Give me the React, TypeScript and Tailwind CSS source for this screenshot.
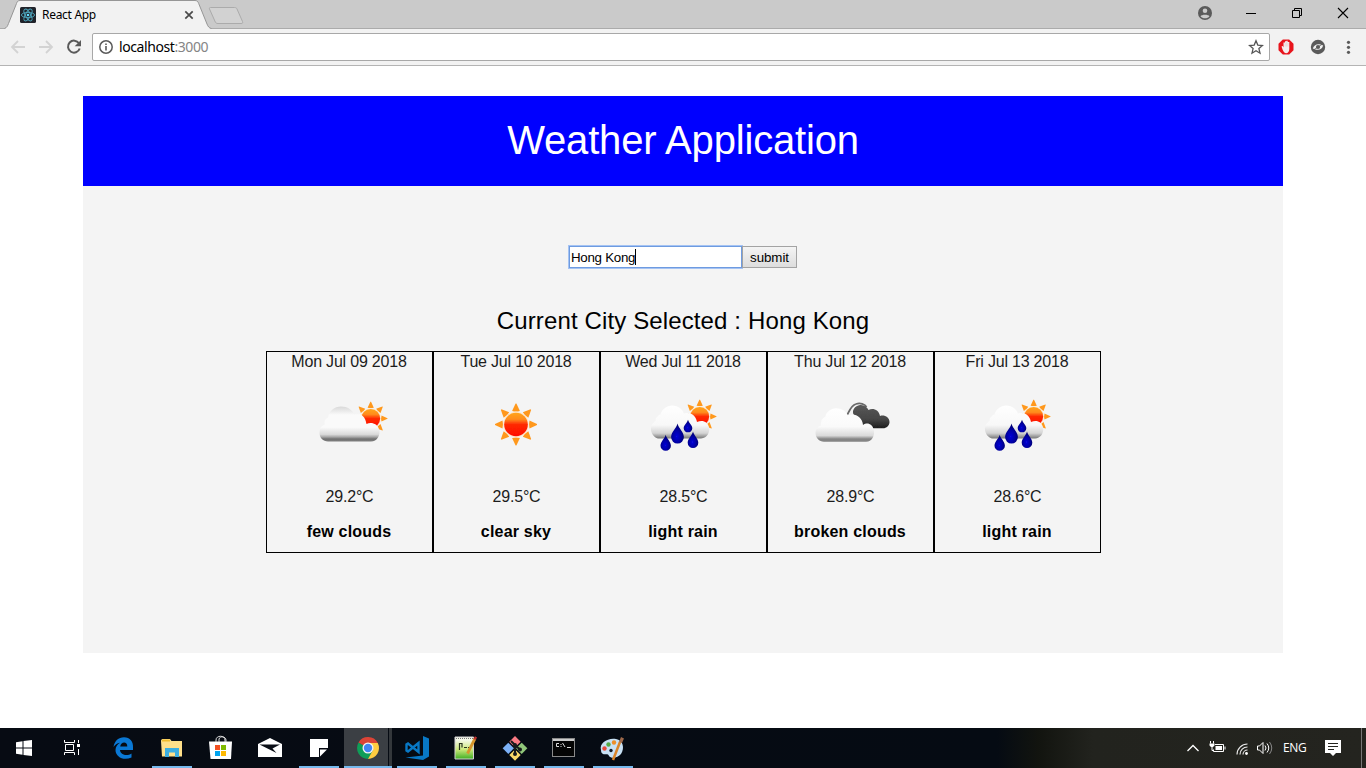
import React from "react";

function TabStrip() {
  return (
    <div className="flex h-[29px] w-full bg-[#cacaca]">
      <div className="relative h-[29px] w-[1184px]">
        <svg className="block h-[29px] w-[1184px]" viewBox="0 0 1184 29" fill="none">
          <path d="M0 28.5H1184" stroke="#ababab" />
          <path d="M4.500 29C7 27.500 7.500 26 8.500 23.500L16.500 3.500C17.200 1.500 18 .5 20 .5H195C197 .5 198 1.500 198.700 3.500L207 24C208 26.500 209 28 211.500 29Z" fill="#f2f2f2" />
          <path d="M4.500 28.500C7 27.500 7.500 26 8.500 23.500L16.500 3.500C17.200 1.500 18 .5 20 .5H195C197 .5 198 1.500 198.700 3.500L207 24C208 26.500 209 28 211.500 28.500" stroke="#969696" />
          <path d="M210.500 7.500H234.500C236 7.500 236.600 8 237 9L242.500 21.500C243 23 242.500 23.500 241 23.500H218C216.500 23.500 215.800 23 215.300 22L209.500 9C209.200 8 209.500 7.500 210.500 7.500Z" fill="#d2d2d2" stroke="#ababab" />
          <rect x="20" y="7" width="16" height="16" rx="1.500" fill="#20232a" />
          <g stroke="#4fa9c0" strokeWidth=".9">
            <ellipse cx="28" cy="15" rx="6.600" ry="2.600" />
            <ellipse cx="28" cy="15" rx="6.600" ry="2.600" transform="rotate(60 28 15)" />
            <ellipse cx="28" cy="15" rx="6.600" ry="2.600" transform="rotate(120 28 15)" />
          </g>
          <circle cx="28" cy="15" r="1.300" fill="#61dafb" />
          <path d="M185.300 11.300L192.700 18.700M192.700 11.300L185.300 18.700" stroke="#4a4a4a" strokeWidth="1.700" />
        </svg>
        <span className="absolute left-[42px] top-[7px] text-[12px] leading-[16px] tracking-[-0.3px] text-black">React App</span>
      </div>
      <svg className="block h-[29px] w-[182px]" viewBox="1184 0 182 29" fill="none">
        <path d="M1184 28.500H1366" stroke="#ababab" />
        <circle cx="1205" cy="13" r="7" fill="#5a5a5a" />
        <circle cx="1205" cy="10.700" r="2.300" fill="#cacaca" />
        <path d="M1200.500 16.300C1201.500 14.300 1208.500 14.300 1209.500 16.300C1207.500 19 1202.500 19 1200.500 16.300Z" fill="#cacaca" />
        <path d="M1246 13.500H1256M1292.500 10.500H1299.500V17.500H1292.500ZM1294.500 10V8.500H1301.500V15.500H1300" stroke="#000" />
        <path d="M1338 8L1348 18M1348 8L1338 18" stroke="#000" strokeWidth="1.100" />
      </svg>
    </div>
  );
}

function Toolbar() {
  return (
    <div className="flex h-[37px] w-full items-start border-b border-[#b4b4b4] bg-[#f2f2f2]">
      <svg className="block h-9 w-[92px]" viewBox="0 29 92 36" fill="none">
        <path d="M25 47H12.500M18 41L12 47L18 53M39 47H51.500M46 41L52 47L46 53" stroke="#d3d3d3" strokeWidth="1.800" />
        <path d="M79 43.300A6 6 0 1 0 79.700 48.500" stroke="#5a5a5a" strokeWidth="2" />
        <path d="M81 40V46.300H74.700Z" fill="#5a5a5a" />
      </svg>
      <div className="mt-1 flex h-7 w-[1178px] items-center justify-between rounded-[2px] border border-[#a8a8a8] bg-white">
        <div className="flex items-center">
          <svg className="ml-[5px] h-4 w-4" viewBox="0 0 16 16" fill="none">
            <circle cx="8" cy="8" r="6.200" stroke="#5a5a5a" strokeWidth="1.500" />
            <path d="M8 7V11.500M8 4.400V6" stroke="#5a5a5a" strokeWidth="1.600" />
          </svg>
          <span className="ml-[5px] text-[14px] leading-[18px] tracking-[-0.42px] text-black">localhost<span className="text-[#858585]">:3000</span></span>
        </div>
        <svg className="mr-[5px] h-4 w-4" viewBox="0 0 16 16" fill="none">
          <path d="M8 1.800L9.800 6.100L14.500 6.500L10.900 9.600L12 14.200L8 11.700L4 14.200L5.100 9.600L1.500 6.500L6.200 6.100Z" stroke="#555" strokeWidth="1.300" />
        </svg>
      </div>
      <svg className="block h-9 w-24" viewBox="1270 29 96 36" fill="none">
        <path d="M1282.800 39.500H1289.200L1293.500 43.700V50.300L1289.200 54.500H1282.800L1278.500 50.300V43.700Z" fill="#e8141c" />
        <path d="M1281.500 46.500L1282.800 46L1283.500 47.500V42.500H1285V41.300H1286.400V40.800H1287.700V42H1289.300V49C1289.300 51.500 1288 53.300 1286 53.300C1284 53.300 1283 51 1281.500 46.500Z" fill="#f4eeee" />
        <path d="M1285.200 43V46.500M1286.700 42V46.500M1288 43V46.500" stroke="#e3b9b9" strokeWidth=".4" />
        <circle cx="1318" cy="47" r="7.200" fill="#5a5a5a" />
        <path d="M1312.800 48.500C1314 44.500 1318 42.800 1323.200 45.500C1322 49.500 1318 51.200 1312.800 48.500Z" fill="#f2f2f2" />
        <circle cx="1318" cy="47" r="2.100" fill="#5a5a5a" />
        <path d="M1313.500 50L1322.500 44" stroke="#5a5a5a" strokeWidth=".8" />
        <g fill="#5a5a5a"><circle cx="1348.500" cy="42.300" r="1.600" /><circle cx="1348.500" cy="47.300" r="1.600" /><circle cx="1348.500" cy="52.300" r="1.600" /></g>
      </svg>
    </div>
  );
}

function WeatherDefs() {
  return (
    <defs>
      <linearGradient id="sunDisc" x1="0" y1="0" x2="0" y2="1">
        <stop offset="0" stopColor="#ffa51c" />
        <stop offset=".28" stopColor="#ff8c1e" />
        <stop offset=".5" stopColor="#ff2a04" />
        <stop offset="1" stopColor="#ff0a00" />
      </linearGradient>
      <linearGradient id="cloudFill" gradientUnits="userSpaceOnUse" x1="0" y1="35" x2="0" y2="70.500">
        <stop offset="0" stopColor="#d6d6d6" />
        <stop offset=".25" stopColor="#fafafa" />
        <stop offset=".6" stopColor="#fafafa" />
        <stop offset=".8" stopColor="#dadada" />
        <stop offset=".87" stopColor="#a9a9a9" />
        <stop offset=".93" stopColor="#707070" />
        <stop offset="1" stopColor="#808080" />
      </linearGradient>
      <linearGradient id="whiteCloud" gradientUnits="userSpaceOnUse" x1="0" y1="37" x2="0" y2="70.700">
        <stop offset="0" stopColor="#fff" />
        <stop offset=".55" stopColor="#fafafa" />
        <stop offset=".82" stopColor="#dadada" />
        <stop offset=".92" stopColor="#858585" />
        <stop offset="1" stopColor="#858585" />
      </linearGradient>
      <linearGradient id="rainCloud" gradientUnits="userSpaceOnUse" x1="0" y1="34" x2="0" y2="67.500">
        <stop offset="0" stopColor="#fff" />
        <stop offset=".6" stopColor="#f8f8f8" />
        <stop offset=".84" stopColor="#d4d4d4" />
        <stop offset="1" stopColor="#777" />
      </linearGradient>
      <linearGradient id="darkCloud" x1="0" y1="0" x2="0" y2="1">
        <stop offset="0" stopColor="#595959" />
        <stop offset=".6" stopColor="#464646" />
        <stop offset="1" stopColor="#1c1c1c" />
      </linearGradient>
      <radialGradient id="drop" cx=".45" cy=".65" r=".6">
        <stop offset="0" stopColor="#0808d8" />
        <stop offset=".5" stopColor="#0000a8" />
        <stop offset="1" stopColor="#00006c" />
      </radialGradient>
      <filter id="soft" x="-10%" y="-10%" width="120%" height="120%"><feGaussianBlur stdDeviation=".6" /></filter>
    </defs>
  );
}

const RAYS = [0, 45, 90, 135, 180, 225, 270, 315];

function Sun({ x, y, scale = 1 }: { x: number; y: number; scale?: number }) {
  return (
    <g transform={`translate(${x} ${y}) scale(${scale})`}>
      {RAYS.map((a) => (
        <path key={a} d="M-3.900 -13.500L-.4 -21H.4L3.900 -13.500Q0 -12.500 -3.900 -13.500Z" fill="#ff981c" transform={`rotate(${a})`} />
      ))}
      <circle r="12.800" fill="#ffe6c8" />
      <circle r="11.800" fill="url(#sunDisc)" />
    </g>
  );
}

const LOW_CLOUD = "M61 70.500C56 70.500 52.500 66.500 52.500 62C52.500 58 54 55 57.500 53.500C57 50 58.500 47.500 61 46.500C62 40 67.500 35.500 74 35.500C80.500 35.500 85.500 39 87 43.500C92 41.500 98 44 99.500 53C104 50.500 110.500 52.500 112 58C114 64 110 70.500 104 70.500Z";
const RAIN_CLOUD = "M57 67.500C53 66.500 49.500 62 50 57C50.500 53.500 52.500 51 54.500 50C54.500 46.500 57.500 44 59.500 43.500C61 38 66 34.500 71 34.500C77.500 34.500 81.500 38.500 83 42.500C89.500 41 94.500 44 96 51C101.500 48.500 106.500 50.500 108 56C109 61 106.500 67 100 67.500Z";
const WHITE_CLOUD = "M56 70.700C51 70.700 47.500 66.500 47.500 62C47.500 58 50 55.500 53 54.500C52.500 50.500 54 47 57.500 45.500C58 41 63 37.300 68 37.300C73.500 37.300 78.500 40.500 80 44.500C87 41.500 94.500 46.500 95 54C99.500 50.500 104.500 53.500 105.500 58C107.500 64.500 104 70.700 98 70.700Z";

function Drop({ x, y, w, h }: { x: number; y: number; w: number; h: number }) {
  return (
    <path
      transform={`translate(${x} ${y}) scale(${w / 10} ${h / 15})`}
      d="M0 0C.8 3.500 5 6.500 5 10.200A5 4.800 0 0 1 -5 10.200C-5 6.500 -.8 3.500 0 0Z"
      fill="url(#drop)"
    />
  );
}

type Sky = "few" | "clear" | "rain" | "broken";

function WeatherIcon({ sky }: { sky: Sky }) {
  return (
    <svg className="block h-[100px] w-[165px]" viewBox="0 0 165 100">
      <WeatherDefs />
      <g filter="url(#soft)">
        {sky === "clear" && <Sun x={82} y={53.5} />}
        {sky === "few" && (
          <>
            <Sun x={103.700} y={47.500} scale={0.8} />
            <path d={LOW_CLOUD} fill="url(#cloudFill)" />
          </>
        )}
        {sky === "rain" && (
          <>
            <Sun x={98.700} y={45.500} scale={0.8} />
            <path d={RAIN_CLOUD} fill="url(#rainCloud)" />
            <Drop x={64.700} y={63.800} w={10.400} h={16} />
            <Drop x={76.500} y={52.500} w={12.800} h={20} />
            <Drop x={87} y={48.800} w={8.600} h={12.500} />
            <Drop x={92} y={60.500} w={10.600} h={16.500} />
          </>
        )}
        {sky === "broken" && (
          <>
            <path d="M79 44C81 42 82 35 88 33C92 31.500 97 33 98.500 36" fill="none" stroke="#6a6a6a" strokeWidth="1.800" />
            <path d="M86 44C83 40 87 34.500 92 34C96 33.500 99 36 100.500 39C105 36.500 111 39 112 45C116.500 43.500 121.500 46.500 121.500 51C121.500 54.500 118.500 57.300 115 57.300H97Z" fill="url(#darkCloud)" />
            <path d={WHITE_CLOUD} fill="url(#whiteCloud)" />
          </>
        )}
      </g>
    </svg>
  );
}

const DAYS: { date: string; sky: Sky; temp: string; text: string }[] = [
  { date: "Mon Jul 09 2018", sky: "few", temp: "29.2°C", text: "few clouds" },
  { date: "Tue Jul 10 2018", sky: "clear", temp: "29.5°C", text: "clear sky" },
  { date: "Wed Jul 11 2018", sky: "rain", temp: "28.5°C", text: "light rain" },
  { date: "Thu Jul 12 2018", sky: "broken", temp: "28.9°C", text: "broken clouds" },
  { date: "Fri Jul 13 2018", sky: "rain", temp: "28.6°C", text: "light rain" },
];

function WeatherPage() {
  return (
    <main className="flex-1 bg-white px-[83px] pt-[30px] font-['Liberation_Sans',Arial,sans-serif] text-black">
      <header className="flex h-[90px] items-center justify-center bg-[#0000ff] pb-[2px]">
        <h1 className="text-[40px] leading-[46px] tracking-[-0.18px] text-white">Weather Application</h1>
      </header>
      <section className="flex h-[467px] flex-col items-center bg-[#f4f4f4] pt-[60px]">
        <div className="flex h-[22px] w-[228px]">
          <div className="flex w-[173px] items-center border border-[#6e9be0] bg-white pl-px text-[13.333px] leading-4 tracking-[-0.28px] outline outline-1 outline-[#a5c3f3]">
            <span className="pt-[2px]">Hong Kong</span>
            <span className="h-4 w-px bg-black" />
          </div>
          <button className="w-[55px] border border-[#a3a3a3] bg-linear-to-b from-[#f4f4f4] to-[#dddddd] pt-[2px] text-[13.333px] leading-4 tracking-[-0.05px]">submit</button>
        </div>
        <h2 className="mt-[39px] text-2xl leading-7 tracking-[0.13px]">Current City Selected : Hong Kong</h2>
        <div className="mt-4 flex">
          {DAYS.map((d) => (
            <article key={d.date} className="flex h-[202px] w-[167px] flex-col items-center border border-black text-base leading-[18px]">
              <p className="h-[19px] pt-px tracking-[-0.2px] text-[#1c1c1c]">{d.date}</p>
              <WeatherIcon sky={d.sky} />
              <p className="mt-[17px] pl-px tracking-[-0.2px] text-[#1c1c1c]">{d.temp}</p>
              <p className="mt-[17px] font-bold tracking-[0.2px]">{d.text}</p>
            </article>
          ))}
        </div>
      </section>
    </main>
  );
}

function TaskbarIcons() {
  return (
    <svg className="block h-10 w-[640px]" viewBox="0 728 640 40" fill="none">
      <rect x="344" y="728" width="44" height="40" fill="#3b3f44" />
      <rect x="389" y="728" width="3" height="40" fill="#33373b" />
      <g fill="#76b9ed">
        <rect x="152" y="766" width="40" height="2" />
        <rect x="299" y="766" width="40" height="2" />
        <rect x="344" y="766" width="48" height="2" />
        <rect x="397" y="766" width="40" height="2" />
        <rect x="446" y="766" width="40" height="2" />
        <rect x="495" y="766" width="40" height="2" />
        <rect x="544" y="766" width="40" height="2" />
        <rect x="593" y="766" width="40" height="2" />
      </g>
      <path d="M16 742.200L22.500 741.300V747.500H16ZM23.500 741.100L32 740V747.500H23.500ZM16 748.500H22.500V754.700L16 753.800ZM23.500 748.500H32V756L23.500 754.900Z" fill="#fff" />
      <path d="M64.500 740V742.500H74.500V740M65.500 744.500H73.500V750.500H65.500ZM64.500 755V752.500H74.500V755M78.500 740V743M78.500 749V755" stroke="#fff" />
      <rect x="77" y="744" width="3" height="3" fill="#fff" />
      <path d="M113.500 747C114.500 741 118.500 737.300 124 737.300C130 737.300 133.500 742 133 747.500V750H120C120.500 755 127 756.500 131.500 753.500V757.500C123.500 761 115.500 757 115.500 750C115.500 747 117.500 744 120 742.700C117 743.200 115 744.800 113.500 747ZM120.200 746.500H127.300C127.500 741 121 741 120.200 746.500Z" fill="#0a78d4" />
      <path d="M161 741C161 739.500 162 739 163 739H170L171.500 741H182V756.500H162Z" fill="#ffe08a" />
      <path d="M162 739.500H170V741.500H162Z" fill="#f1bc2d" />
      <path d="M165 748H179V757H175V752.500H169V757H165Z" fill="#3daee0" />
      <path d="M209 741.500H232L231 759H210.500Z" fill="#fff" />
      <path d="M216 742V740C216 735 225 735 225 740V742M219 742V739C220 735.500 226 736.500 226 740V742" stroke="#dedede" />
      <path d="M215 745H220V750H215Z" fill="#f25022" /><path d="M221 745H226V750H221Z" fill="#7fba00" /><path d="M215 751H220V756H215Z" fill="#00a4ef" /><path d="M221 751H226V756H221Z" fill="#ffb900" />
      <path d="M258 744L270 738L282 744V757H258Z" fill="#fff" />
      <path d="M259.500 744.500H280L272.500 748.500L276.500 753L259.500 744.500Z" fill="#0a0e16" />
      <path d="M310 739H328V748H319V757H310Z" fill="#fff" /><path d="M320 749.500H327L320 756.500Z" fill="#fff" />
      <path d="M368 748L358.500 742.500A11 11 0 0 0 368 759L373 750.500Z" fill="#0f9d58" />
      <path d="M368 743H377.800A11 11 0 0 1 368 759L373 750Z" fill="#ffcd40" />
      <path d="M358.500 742.500A11 11 0 0 1 377.800 743H368V748Z" fill="#db4437" />
      <circle cx="368" cy="748" r="5.500" fill="#f4f4f4" /><circle cx="368" cy="748" r="4.200" fill="#4285f4" />
      <path d="M423 736L429 738.500V756.500L423 760L405.500 757.500L423 755.500Z" fill="#0878c5" />
      <path d="M418.500 743L408 751.500L406.500 750.500V744.500L408 743.500L418.500 752Z" stroke="#0878c5" strokeWidth="2.400" />
      <linearGradient id="notepadFill" gradientUnits="userSpaceOnUse" x1="0" y1="740" x2="0" y2="759"><stop offset="0" stopColor="#f4f8e8" /><stop offset=".5" stopColor="#cbe87a" /><stop offset="1" stopColor="#3fae22" /></linearGradient>
      <path d="M455 737H473.500V759H455Z" fill="url(#notepadFill)" stroke="#d2d2d2" />
      <path d="M456 738.500H473" stroke="#777" strokeDasharray="1 1" />
      <path d="M459.500 750V743.500H462V747.500M464 747.500H467M468 747.500H470" stroke="#29331c" strokeWidth="1.200" />
      <path d="M467.500 753.500L475 738.500" stroke="#d6952b" strokeWidth="2.800" /><path d="M474.500 739.500L476 736.800" stroke="#ba3030" strokeWidth="2.500" />
      <g transform="rotate(45 515 748)">
        <rect x="506.500" y="739.500" width="8" height="8" fill="#fa7b84" />
        <rect x="506.500" y="749" width="8" height="8" fill="#7cb1f7" /><rect x="516" y="739.500" width="8" height="8" fill="#91c77a" /><rect x="516" y="749" width="8" height="8" fill="#fbd968" />
      </g>
      <path d="M511 741L515 745V755M515 745L520.500 750" stroke="#171a1c" strokeWidth="2" /><circle cx="515" cy="745" r="2" fill="#171a1c" /><circle cx="515" cy="754" r="2" fill="#171a1c" /><circle cx="520" cy="749.500" r="2" fill="#171a1c" />
      <rect x="552.500" y="738.500" width="22" height="18" fill="#050505" stroke="#8a8a8a" /><path d="M553 740H574" stroke="#ccc" strokeWidth="2" />
      <path d="M559 743.500H556.500V746.500H559M561 744V745M561 746V747M562.500 743L565 747M567 747.500H571" stroke="#ddd" />
      <path d="M601 750C599 743 608 737.500 616 739C623 740 625 748 621 754C618 758 611 759 609 756C608 753 605 755 603 754C601.500 753 601 752 601 750Z" fill="#c8e1f4" />
      <circle cx="604.500" cy="748.500" r="2.200" fill="#e64b3c" /><circle cx="608.500" cy="744.500" r="2.200" fill="#55ac47" /><circle cx="614" cy="742.500" r="2.200" fill="#ed8e27" /><circle cx="611" cy="750.500" r="1.700" fill="#101722" />
      <path d="M613 760L620 742" stroke="#d98429" strokeWidth="2.500" /><path d="M619 742L621 737L624 738.500L622 743Z" fill="#9e694b" />
    </svg>
  );
}

function Taskbar() {
  return (
    <footer className="flex h-10 w-full justify-between bg-[linear-gradient(90deg,#070b13_0%,#050b13_73%,#12140f_76%,#22231e_80%,#24241f_100%)]">
      <TaskbarIcons />
      <div className="flex items-center text-white">
        <svg className="block h-10 w-[96px]" viewBox="1180 728 96 40" fill="none">
          <path d="M1187.500 751L1193 745.500L1198.500 751" stroke="#fff" strokeWidth="1.300" />
          <path d="M1215 744.500H1223.500V751.500H1213.500V749.500M1225 746.500V749.500M1210.500 741V743.500M1213.500 741V743.500M1212 747V750.500H1214" stroke="#fff" />
          <path d="M1209.500 743.500H1214.500V745.500L1213 747H1211L1209.500 745.500ZM1215.500 746H1222V750H1215.500Z" fill="#fff" />
          <path d="M1237 754.500A10.500 10.500 0 0 1 1247.500 744M1240 754.500A7.500 7.500 0 0 1 1247.500 747M1243 754.500A4.500 4.500 0 0 1 1247.500 750" stroke="#e8e8e8" strokeWidth="1.200" />
          <circle cx="1246.500" cy="753.500" r="1.400" fill="#fff" />
          <path d="M1257.500 746H1259.500L1263 742.500V753.500L1259.500 750H1257.500ZM1265 745.500Q1267 748 1265 750.500M1267 743.500Q1270.500 748 1267 752.500" stroke="#fff" /><path d="M1269.500 742Q1274 748 1269.500 754" stroke="#888" />
        </svg>
        <span className="w-[43px] pl-[7px] font-['Open_Sans','Noto_Sans',sans-serif] text-[12px] leading-4 tracking-[-0.4px]">ENG</span>
        <svg className="block h-10 w-[47px]" viewBox="1319 728 47 40" fill="none">
          <path d="M1325 740H1341V753H1336L1333 756L1330 753H1325Z" fill="#fff" />
          <path d="M1328 743.500H1338M1328 746.500H1338M1328 749.500H1334" stroke="#24241f" /><path d="M1361.500 728V768" stroke="#777" />
        </svg>
      </div>
    </footer>
  );
}

export default function App() {
  return (
    <div className="flex h-[768px] w-[1366px] flex-col overflow-hidden bg-white font-['Noto_Sans','Open_Sans',sans-serif]">
      <TabStrip />
      <Toolbar />
      <WeatherPage />
      <Taskbar />
    </div>
  );
}
